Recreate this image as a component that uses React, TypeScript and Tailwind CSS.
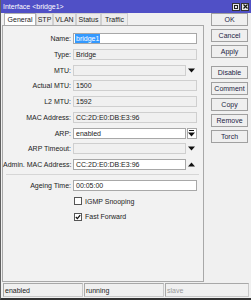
import type { ReactNode } from "react";

const font = { fontFamily: '"Liberation Sans", Arial, sans-serif' };

function Arrow({ up = false }: { up?: boolean }) {
  return (
    <svg width="7" height="5" viewBox="0 0 7 5" className="block">
      <polygon points={up ? "0,4.5 7,4.5 3.5,0.5" : "0,0.5 7,0.5 3.5,4.5"} fill="#111" />
    </svg>
  );
}

function Field({
  label,
  value,
  white = false,
  trail,
  selected = false,
}: {
  label: string;
  value?: string;
  white?: boolean;
  trail?: ReactNode;
  selected?: boolean;
}) {
  return (
    <div className="flex items-center h-[11px]">
      <div className="w-[68px] shrink-0 text-right text-[7px] leading-none text-[#222] whitespace-nowrap">
        {label}
      </div>
      <div className="w-[2px] shrink-0" />
      <div
        className={`h-[11px] flex items-center px-[1px] text-[7px] leading-none text-[#222] whitespace-nowrap overflow-hidden border ${
          trail ? "w-[113px]" : "w-[124px]"
        } ${white ? "bg-white border-[#a8a8a8]" : "bg-[#f0f0f0] border-[#cfcfcf]"}`}
      >
        {selected ? (
          <span className="bg-[#3399ff] text-white px-[1px] py-[1px]">{value}</span>
        ) : (
          <span className="px-[1px]">{value}</span>
        )}
      </div>
      {trail && <div className="w-[11px] h-[11px] flex items-center justify-center">{trail}</div>}
    </div>
  );
}

function Check({ label, checked = false }: { label: string; checked?: boolean }) {
  return (
    <div className="flex items-center h-[11px] pl-[71px]">
      <div className="w-[8px] h-[8px] border border-[#555] bg-white flex items-center justify-center">
        {checked && (
          <svg width="6" height="6" viewBox="0 0 6 6">
            <polyline points="0.8,3 2.4,4.6 5.2,1.2" fill="none" stroke="#111" strokeWidth="1.3" />
          </svg>
        )}
      </div>
      <span className="ml-[3px] text-[7px] leading-none text-[#222] whitespace-nowrap">{label}</span>
    </div>
  );
}

function Btn({ children }: { children: string }) {
  return (
    <div className="h-[13px] w-[37px] border border-[#a0a0a0] bg-[#efefef] flex items-center justify-center text-[7px] leading-none text-[#1e1e44]">
      {children}
    </div>
  );
}

function Tab({ children, active = false, w }: { children: string; active?: boolean; w: string }) {
  return (
    <div
      className={`${w} h-[12px] flex items-center justify-center text-[7px] leading-none text-[#222] border border-b-0 ${
        active ? "bg-white border-[#b0b0b0]" : "bg-[#ececec] border-[#d0d0d0] mt-[1px] h-[11px]"
      }`}
    >
      {children}
    </div>
  );
}

export default function App() {
  return (
    <div
      className="w-[251px] h-[300px] bg-[#f0f0f0] border-l border-[#606060] border-b-2 border-b-[#333] flex flex-col overflow-hidden"
      style={font}
    >
      <div className="h-[13px] bg-[#5050c6] flex items-center justify-between pl-[2px] pr-[2px] shrink-0">
        <span className="text-[7px] leading-none text-white whitespace-nowrap">Interface &lt;bridge1&gt;</span>
        <div className="flex gap-[1px]">
          <div className="w-[8px] h-[8px] bg-[#e8e8e8] border border-[#333] flex items-center justify-center">
            <div className="w-[4px] h-[4px] border border-[#222]" />
          </div>
          <div className="w-[8px] h-[8px] bg-[#e8e8e8] border border-[#333] flex items-center justify-center">
            <svg width="5" height="5" viewBox="0 0 5 5">
              <path d="M0.5 0.5 L4.5 4.5 M4.5 0.5 L0.5 4.5" stroke="#111" strokeWidth="1.2" />
            </svg>
          </div>
        </div>
      </div>

      <div className="flex flex-1 min-h-0">
        <div className="w-[202px] ml-[1px] flex flex-col shrink-0">
          <div className="flex items-end h-[12px] pl-[2px]">
            <Tab active w="w-[32px]">General</Tab>
            <Tab w="w-[17px]">STP</Tab>
            <Tab w="w-[23px]">VLAN</Tab>
            <Tab w="w-[25px]">Status</Tab>
            <Tab w="w-[27px]">Traffic</Tab>
          </div>
          <div className="h-[257px] border border-[#a8a8a8] bg-[#f2f2f2] pt-[7px]">
            <div className="flex flex-col gap-y-[4.75px]">
              <Field label="Name:" value="bridge1" white selected />
              <Field label="Type:" value="Bridge" />
              <Field label="MTU:" value="" trail={<Arrow />} />
              <Field label="Actual MTU:" value="1500" />
              <Field label="L2 MTU:" value="1592" />
              <Field label="MAC Address:" value="CC:2D:E0:DB:E3:96" />
              <Field
                label="ARP:"
                value="enabled"
                white
                trail={
                  <div className="w-[10px] h-[11px] border border-[#a8a8a8] bg-white flex flex-col items-center justify-center gap-[1px]">
                    <div className="w-[5px] h-[1px] bg-[#111]" />
                    <Arrow />
                  </div>
                }
              />
              <Field label="ARP Timeout:" value="" trail={<Arrow />} />
              <Field label="Admin. MAC Address:" value="CC:2D:E0:DB:E3:96" white trail={<Arrow up />} />
            </div>
            <div className="h-[1px] bg-[#d6d6d6] ml-[3px] mr-[4px] mt-[4px] mb-[5px]" />
            <div className="flex flex-col gap-y-[4.5px]">
              <Field label="Ageing Time:" value="00:05:00" white />
              <Check label="IGMP Snooping" />
              <Check label="Fast Forward" checked />
            </div>
          </div>
        </div>

        <div className="flex flex-col ml-[7px] gap-[3px]">
          <Btn>OK</Btn>
          <Btn>Cancel</Btn>
          <Btn>Apply</Btn>
          <div className="h-[2px]" />
          <Btn>Disable</Btn>
          <Btn>Comment</Btn>
          <Btn>Copy</Btn>
          <Btn>Remove</Btn>
          <Btn>Torch</Btn>
        </div>
      </div>

      <div className="h-[15px] flex gap-[1px] pl-[2px] pr-[2px] pb-[1px] shrink-0">
        <div className="w-[80px] border border-[#c8c8c8] border-t-[#a8a8a8] border-l-[#a8a8a8] flex items-center px-[1px] text-[7px] leading-none text-[#222]">
          enabled
        </div>
        <div className="w-[80px] border border-[#c8c8c8] border-t-[#a8a8a8] border-l-[#a8a8a8] flex items-center px-[1px] text-[7px] leading-none text-[#222]">
          running
        </div>
        <div className="flex-1 border border-[#c8c8c8] border-t-[#a8a8a8] border-l-[#a8a8a8] flex items-center px-[1px] text-[7px] leading-none text-[#999]">
          slave
        </div>
      </div>
    </div>
  );
}
